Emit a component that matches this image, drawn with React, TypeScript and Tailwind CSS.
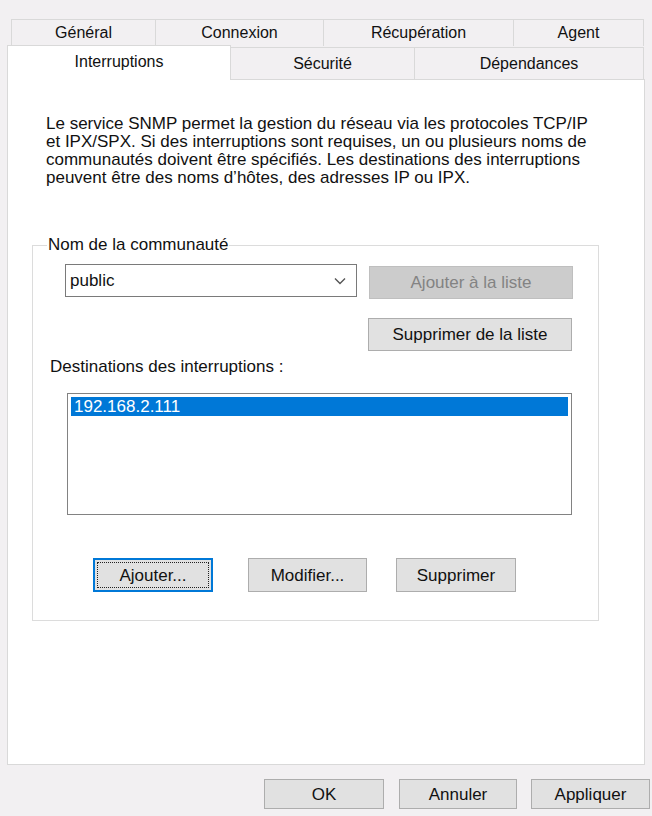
import React from "react";

const font = "font-['Liberation_Sans',Arial,sans-serif]";

function Btn({
  label,
  w,
  h = 33,
  disabled = false,
  isDefault = false,
}: {
  label: string;
  w: string;
  h?: number;
  disabled?: boolean;
  isDefault?: boolean;
}) {
  const base = "relative flex items-center justify-center shrink-0 text-[17px] leading-none";
  if (disabled) {
    return (
      <div className={`${base} ${w} h-[33px] bg-[#cccccc] border border-[#bfbfbf] text-[#838383]`}>
        {label}
      </div>
    );
  }
  if (isDefault) {
    return (
      <div className={`${base} ${w} h-[34px] bg-[#e1e1e1] border-2 border-[#0078d7] text-[#111]`}>
        <span className="absolute inset-[2px] border border-dotted border-[#222]" />
        {label}
      </div>
    );
  }
  return (
    <div
      className={`${base} ${w} ${h === 34 ? "h-[34px]" : h === 30 ? "h-[30px]" : "h-[33px]"} bg-[#e1e1e1] border border-[#adadad] text-[#111]`}
    >
      {label}
    </div>
  );
}

export default function App() {
  return (
    <div
      className={`w-[652px] h-[816px] bg-[#f2f0f2] ${font} text-[17px] text-[#111] flex flex-col pl-[7px] pt-[19px] overflow-hidden`}
    >
      {/* top row of tabs */}
      <div className="flex ml-[4px] h-[27px]">
        <div className="w-[145px] border-l border-t border-r border-[#d9d9d9] flex items-center justify-center text-[16px]">
          Général
        </div>
        <div className="w-[168px] border-t border-r border-[#d9d9d9] flex items-center justify-center text-[16px]">
          Connexion
        </div>
        <div className="w-[190px] border-t border-r border-[#d9d9d9] flex items-center justify-center text-[16px]">
          Récupération
        </div>
        <div className="w-[130px] border-t border-r border-[#d9d9d9] flex items-center justify-center text-[16px]">
          Agent
        </div>
      </div>

      {/* second row of tabs, the active one sits over the page border */}
      <div className="flex items-end h-[33px] relative z-10">
        <div className="w-[224px] h-[35px] -mb-[1px] bg-white border-l border-t border-r border-[#d9d9d9] flex items-center justify-center text-[16px] pb-[2px]">
          Interruptions
        </div>
        <div className="w-[184px] h-[32px] border-t border-r border-[#d9d9d9] flex items-center justify-center text-[16px]">
          Sécurité
        </div>
        <div className="w-[229px] h-[32px] border-t border-r border-[#d9d9d9] flex items-center justify-center text-[16px]">
          Dépendances
        </div>
      </div>

      {/* tab page */}
      <div className="w-[638px] h-[686px] bg-white border border-[#d9d9d9] flex flex-col">
        <p className="pl-[38px] pt-[35px] pr-[20px] leading-[18px] text-[17px]">
          Le service SNMP permet la gestion du réseau via les protocoles TCP/IP
          <br />
          et IPX/SPX. Si des interruptions sont requises, un ou plusieurs noms de
          <br />
          communautés doivent être spécifiés. Les destinations des interruptions
          <br />
          peuvent être des noms d’hôtes, des adresses IP ou IPX.
        </p>

        {/* community group */}
        <div className="relative ml-[24px] mt-[58px] w-[567px] h-[376px] border border-[#dcdcdc] flex flex-col">
          <span className="absolute left-[14px] -top-[10px] bg-white px-[1px] leading-[18px] text-[17px]">
            Nom de la communauté
          </span>

          <div className="flex items-start mt-[18px] ml-[32px]">
            <div className="w-[292px] h-[33px] border border-[#7a7a7a] bg-white flex items-center justify-between pl-[4px] pr-[9px]">
              <span>public</span>
              <svg width="12" height="8" viewBox="0 0 12 8" className="mr-[1px]">
                <path d="M1 1.5 L6 6.5 L11 1.5" fill="none" stroke="#555" strokeWidth="1.4" />
              </svg>
            </div>
            <div className="ml-[12px] mt-[2px]">
              <Btn label="Ajouter à la liste" w="w-[204px]" disabled />
            </div>
          </div>

          <div className="ml-[335px] mt-[19px]">
            <Btn label="Supprimer de la liste" w="w-[204px]" />
          </div>

          <div className="ml-[17px] mt-[7px] leading-[18px]">Destinations des interruptions :</div>

          <div className="ml-[34px] mt-[17px] w-[505px] h-[122px] border border-[#828282] bg-white p-[3px]">
            <div className="h-[19px] bg-[#0078d7] text-white flex items-center pl-[3px] leading-none">
              192.168.2.111
            </div>
          </div>

          <div className="flex items-center ml-[60px] mt-[43px]">
            <Btn label="Ajouter..." w="w-[120px]" isDefault />
            <div className="ml-[35px]">
              <Btn label="Modifier..." w="w-[119px]" h={34} />
            </div>
            <div className="ml-[29px]">
              <Btn label="Supprimer" w="w-[120px]" h={34} />
            </div>
          </div>
        </div>
      </div>

      {/* dialog buttons */}
      <div className="flex w-[643px] justify-end mt-[14px]">
        <Btn label="OK" w="w-[120px]" h={30} />
        <div className="ml-[15px]">
          <Btn label="Annuler" w="w-[118px]" h={30} />
        </div>
        <div className="ml-[14px]">
          <Btn label="Appliquer" w="w-[119px]" h={30} />
        </div>
      </div>
    </div>
  );
}
